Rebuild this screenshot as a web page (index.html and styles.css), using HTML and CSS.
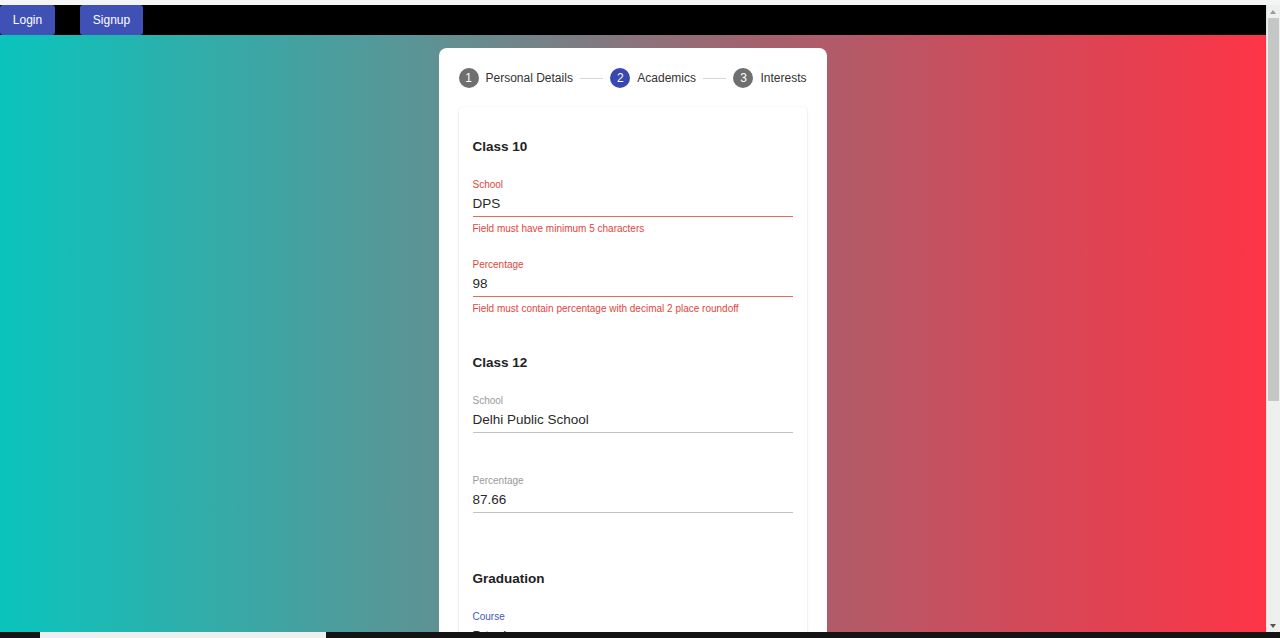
FILE: index.html
```html
<!DOCTYPE html>
<html lang="en">
<head>
<meta charset="utf-8">
<title>Academics</title>
<link rel="stylesheet" href="styles.css">
</head>
<body>
<div class="window">
  <div class="top-strip"></div>
  <div class="viewport">
    <div class="page">
      <nav class="navbar">
        <button class="nav-btn login">Login</button>
        <button class="nav-btn signup">Signup</button>
      </nav>
      <main class="main">
        <div class="card">
          <div class="stepper">
            <div class="step"><span class="step-icon">1</span><span class="step-label">Personal Details</span></div>
            <div class="connector"></div>
            <div class="step"><span class="step-icon active">2</span><span class="step-label">Academics</span></div>
            <div class="connector"></div>
            <div class="step"><span class="step-icon">3</span><span class="step-label">Interests</span></div>
          </div>
          <div class="paper">
            <section class="section">
              <h3 class="section-title">Class 10</h3>
              <div class="field error">
                <label class="field-label">School</label>
                <div class="field-input">DPS</div>
                <p class="helper">Field must have minimum 5 characters</p>
              </div>
              <div class="field error">
                <label class="field-label">Percentage</label>
                <div class="field-input">98</div>
                <p class="helper">Field must contain percentage with decimal 2 place roundoff</p>
              </div>
            </section>
            <section class="section">
              <h3 class="section-title">Class 12</h3>
              <div class="field">
                <label class="field-label">School</label>
                <div class="field-input">Delhi Public School</div>
                <p class="helper">&nbsp;</p>
              </div>
              <div class="field">
                <label class="field-label">Percentage</label>
                <div class="field-input">87.66</div>
                <p class="helper">&nbsp;</p>
              </div>
            </section>
            <section class="section">
              <h3 class="section-title">Graduation</h3>
              <div class="field focused">
                <label class="field-label">Course</label>
                <div class="field-input">B.tech</div>
                <p class="helper">&nbsp;</p>
              </div>
            </section>
          </div>
        </div>
      </main>
    </div>
    <div class="scrollbar">
      <div class="sb-arrow up"></div>
      <div class="sb-track"><div class="sb-thumb"></div></div>
      <div class="sb-arrow down"></div>
    </div>
  </div>
  <div class="bottom-strip"><div class="bottom-tab"></div></div>
</div>
</body>
</html>
```

FILE: styles.css
```css
html, body {
  margin: 0;
  padding: 0;
  height: 100%;
  overflow: hidden;
  font-family: "Liberation Sans", Arial, sans-serif;
}

.window {
  display: flex;
  flex-direction: column;
  height: 638px;
}

.top-strip {
  height: 5px;
  background: #f4f5f5;
  flex: none;
}

.viewport {
  flex: 1;
  display: flex;
  min-height: 0;
}

.page {
  flex: 1;
  display: flex;
  flex-direction: column;
  min-width: 0;
  overflow: hidden;
}

.navbar {
  height: 30px;
  flex: none;
  background: #000;
  display: flex;
  align-items: stretch;
}

.nav-btn {
  border: none;
  background: #3f51b5;
  color: #fff;
  font-family: "Liberation Sans", Arial, sans-serif;
  font-size: 12px;
  border-radius: 3px;
  padding: 0;
  box-shadow: 0 1px 3px rgba(0,0,0,0.3);
}

.login {
  width: 55px;
}

.signup {
  width: 63px;
  margin-left: 25px;
}

.main {
  flex: 1;
  background: linear-gradient(to right, #0ac4bd 0%, #5b9495 33%, #a4616e 60%, #fd3446 100%);
  display: flex;
  justify-content: center;
  align-items: flex-start;
  padding-top: 13px;
  min-height: 0;
}

.card {
  width: 348px;
  background: #fff;
  border-radius: 8px;
  padding: 20px 20px 0;
  margin-left: -1px;
  flex: none;
}

.stepper {
  display: flex;
  align-items: center;
  height: 20px;
}

.step {
  display: flex;
  align-items: center;
}

.step-icon {
  width: 20px;
  height: 20px;
  border-radius: 50%;
  background: #6f6f6f;
  color: #fff;
  font-size: 12px;
  line-height: 20px;
  text-align: center;
}

.step-icon.active {
  background: #3948b0;
}

.step-label {
  margin-left: 7px;
  font-size: 12px;
  color: #333;
}

.connector {
  flex: 1;
  height: 1px;
  background: #d6d6d6;
  margin: 0 7px;
}

.paper {
  margin-top: 19px;
  padding: 30px 14px 40px;
  border-radius: 4px;
  box-shadow: 0 1px 3px rgba(0,0,0,0.12), 0 0 1px rgba(0,0,0,0.08);
}

.section + .section {
  margin-top: 38px;
}

.section-title {
  margin: 0 0 21px;
  font-size: 13.5px;
  line-height: 20px;
  font-weight: bold;
  color: #222;
}

.field + .field {
  margin-top: 23px;
}

.field-label {
  display: block;
  font-size: 10px;
  line-height: 14px;
  color: #9a9a9a;
}

.field-input {
  font-size: 13.5px;
  line-height: 20px;
  padding: 2px 0;
  color: #2a2a2a;
  border-bottom: 1px solid #c2c2c2;
}

.helper {
  margin: 5px 0 0;
  font-size: 10px;
  line-height: 13px;
  color: #e0463d;
}

.error .field-label {
  color: #e0463d;
}

.error .field-input {
  border-bottom-color: #e8675f;
}

.focused .field-label {
  color: #4656b8;
}

.scrollbar {
  width: 14px;
  flex: none;
  background: #eef0ef;
  display: flex;
  flex-direction: column;
  border-left: 1px solid #e2e4e3;
  box-sizing: border-box;
}

.sb-arrow {
  height: 13px;
  flex: none;
  position: relative;
}

.sb-arrow::after {
  content: "";
  position: absolute;
  left: 3px;
  top: 5px;
  border-left: 3.5px solid transparent;
  border-right: 3.5px solid transparent;
}

.sb-arrow.up::after {
  border-bottom: 4px solid #9a9a9a;
}

.sb-arrow.down::after {
  border-top: 4px solid #555;
}

.sb-track {
  flex: 1;
  padding: 0 1px;
}

.sb-thumb {
  height: 383px;
  background: #c4c7c6;
}

.bottom-strip {
  height: 6px;
  flex: none;
  background: #141414;
  position: relative;
}

.bottom-tab {
  position: absolute;
  left: 40px;
  top: 0;
  width: 286px;
  height: 6px;
  background: #eef0ef;
}
```
